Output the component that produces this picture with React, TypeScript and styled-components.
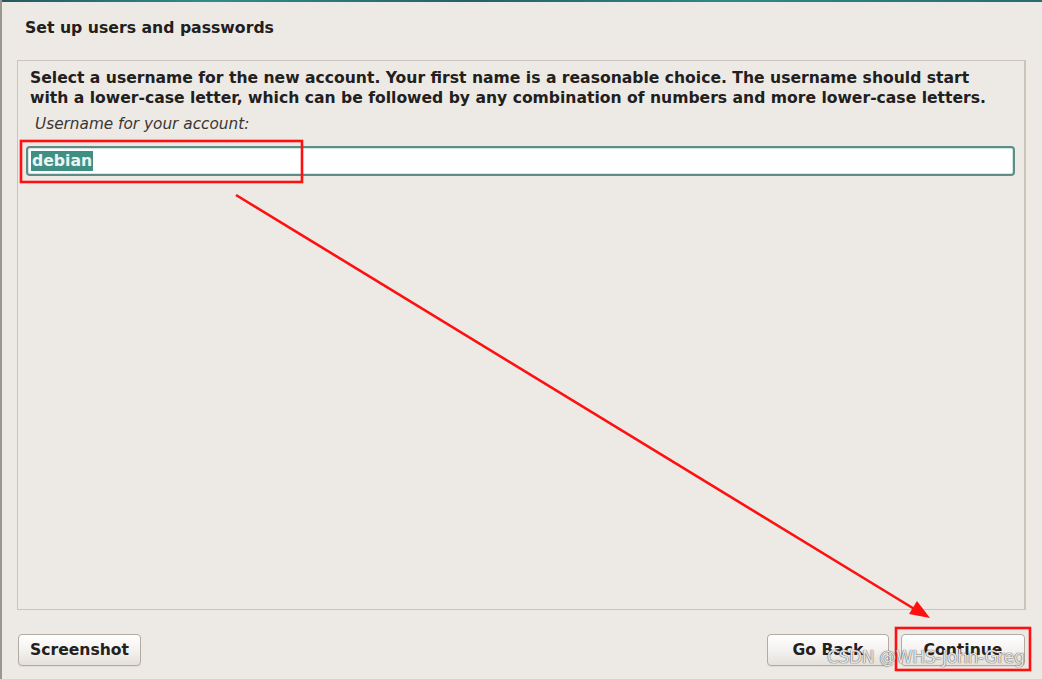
import React from "react";
import styled, { createGlobalStyle } from "styled-components";

const Global = createGlobalStyle`
  html, body { margin: 0; padding: 0; background: #edeae5; }
  #root { width: 1042px; height: 679px; }
`;

const Window = styled.div`
  position: relative;
  box-sizing: border-box;
  width: 1042px;
  height: 679px;
  display: flex;
  flex-direction: column;
  background: #edeae5;
  border-left: 2px solid #9a9791;
  font-family: "DejaVu Sans", "Liberation Sans", sans-serif;
  color: #22201d;
  overflow: hidden;
`;

const TopLine = styled.div`
  height: 2px;
  background: linear-gradient(90deg, #25595e 0%, #2f8d86 20%, #24606a 45%, #2c8a84 70%, #276c70 100%);
`;

const Header = styled.div`
  height: 58px;
  box-sizing: border-box;
  padding: 15px 0 0 23px;
`;

const Title = styled.h1`
  margin: 0;
  font-size: 15.7px;
  font-weight: bold;
  line-height: 22px;
`;

const Panel = styled.div`
  flex: 1;
  margin: 0 16px 0 15px;
  padding: 7px 9px 0 8px;
  border: 1px solid #cbc4bb;
  border-right-width: 2px;
  display: flex;
  flex-direction: column;
`;

const Prompt = styled.p`
  margin: 0;
  padding-left: 4px;
  font-size: 15.6px;
  font-weight: bold;
  line-height: 20px;
  white-space: nowrap;
`;

const FieldLabel = styled.div`
  margin-top: 6px;
  padding-left: 9px;
  font-size: 15.3px;
  font-style: italic;
  line-height: 20px;
  color: #3a3733;
`;

const Input = styled.div`
  margin-top: 12px;
  box-sizing: border-box;
  height: 30px;
  border: 2px solid #5e8c86;
  border-radius: 4px;
  background: #ffffff;
  box-shadow: inset 0 0 0 1px #cfe6e2;
  display: flex;
  align-items: center;
  padding-left: 3px;
`;

const Selected = styled.span`
  background: #3f8f85;
  color: #eaf6f3;
  font-size: 15.7px;
  font-weight: bold;
  line-height: 20px;
  padding: 0 1px;
`;

const Footer = styled.div`
  display: flex;
  align-items: center;
  padding: 24px 17px 13px 16px;
  gap: 12px;
`;

const Spacer = styled.div`
  flex: 1;
`;

const Button = styled.button<{ $w: number }>`
  width: ${(p) => p.$w}px;
  height: 32px;
  box-sizing: border-box;
  border: 1px solid #b3aaa0;
  border-radius: 4px;
  background: linear-gradient(#ffffff, #f3f1ee 55%, #e4e0da);
  font-family: "DejaVu Sans", "Liberation Sans", sans-serif;
  font-size: 15.6px;
  font-weight: bold;
  color: #24211d;
  padding: 0;
  box-shadow: 0 1px 0 rgba(0, 0, 0, 0.06);
`;

const Overlay = styled.svg`
  position: absolute;
  left: -2px;
  top: 0;
  width: 1042px;
  height: 679px;
  pointer-events: none;
`;

const Watermark = styled.div`
  position: absolute;
  left: 825px;
  top: 647px;
  font-family: "DejaVu Sans", "Liberation Sans", sans-serif;
  font-size: 17px;
  letter-spacing: -0.3px;
  color: rgba(255, 255, 255, 0.85);
  text-shadow: 0 0 1px #555, 0 0 1px #555;
  pointer-events: none;
`;

export default function App() {
  return (
    <>
      <Global />
      <Window>
        <TopLine />
        <Header>
          <Title>Set up users and passwords</Title>
        </Header>
        <Panel>
          <Prompt>
            Select a username for the new account. Your first name is a reasonable choice. The username should start
            <br />
            with a lower-case letter, which can be followed by any combination of numbers and more lower-case letters.
          </Prompt>
          <FieldLabel>Username for your account:</FieldLabel>
          <Input>
            <Selected>debian</Selected>
          </Input>
        </Panel>
        <Footer>
          <Button $w={123}>Screenshot</Button>
          <Spacer />
          <Button $w={122}>Go Back</Button>
          <Button $w={124}>Continue</Button>
        </Footer>
        <Overlay viewBox="0 0 1042 679">
          <rect x="21" y="141" width="281" height="41" fill="none" stroke="#ff1010" strokeWidth="2.6" />
          <rect x="896" y="628" width="134" height="42" fill="none" stroke="#ff1010" strokeWidth="2.6" />
          <line x1="236" y1="195" x2="916" y2="610" stroke="#ff1010" strokeWidth="2.6" />
          <polygon points="930,618 909,614 917,601" fill="#ff1010" />
        </Overlay>
        <Watermark>CSDN @WHS-John-Greg</Watermark>
      </Window>
    </>
  );
}
